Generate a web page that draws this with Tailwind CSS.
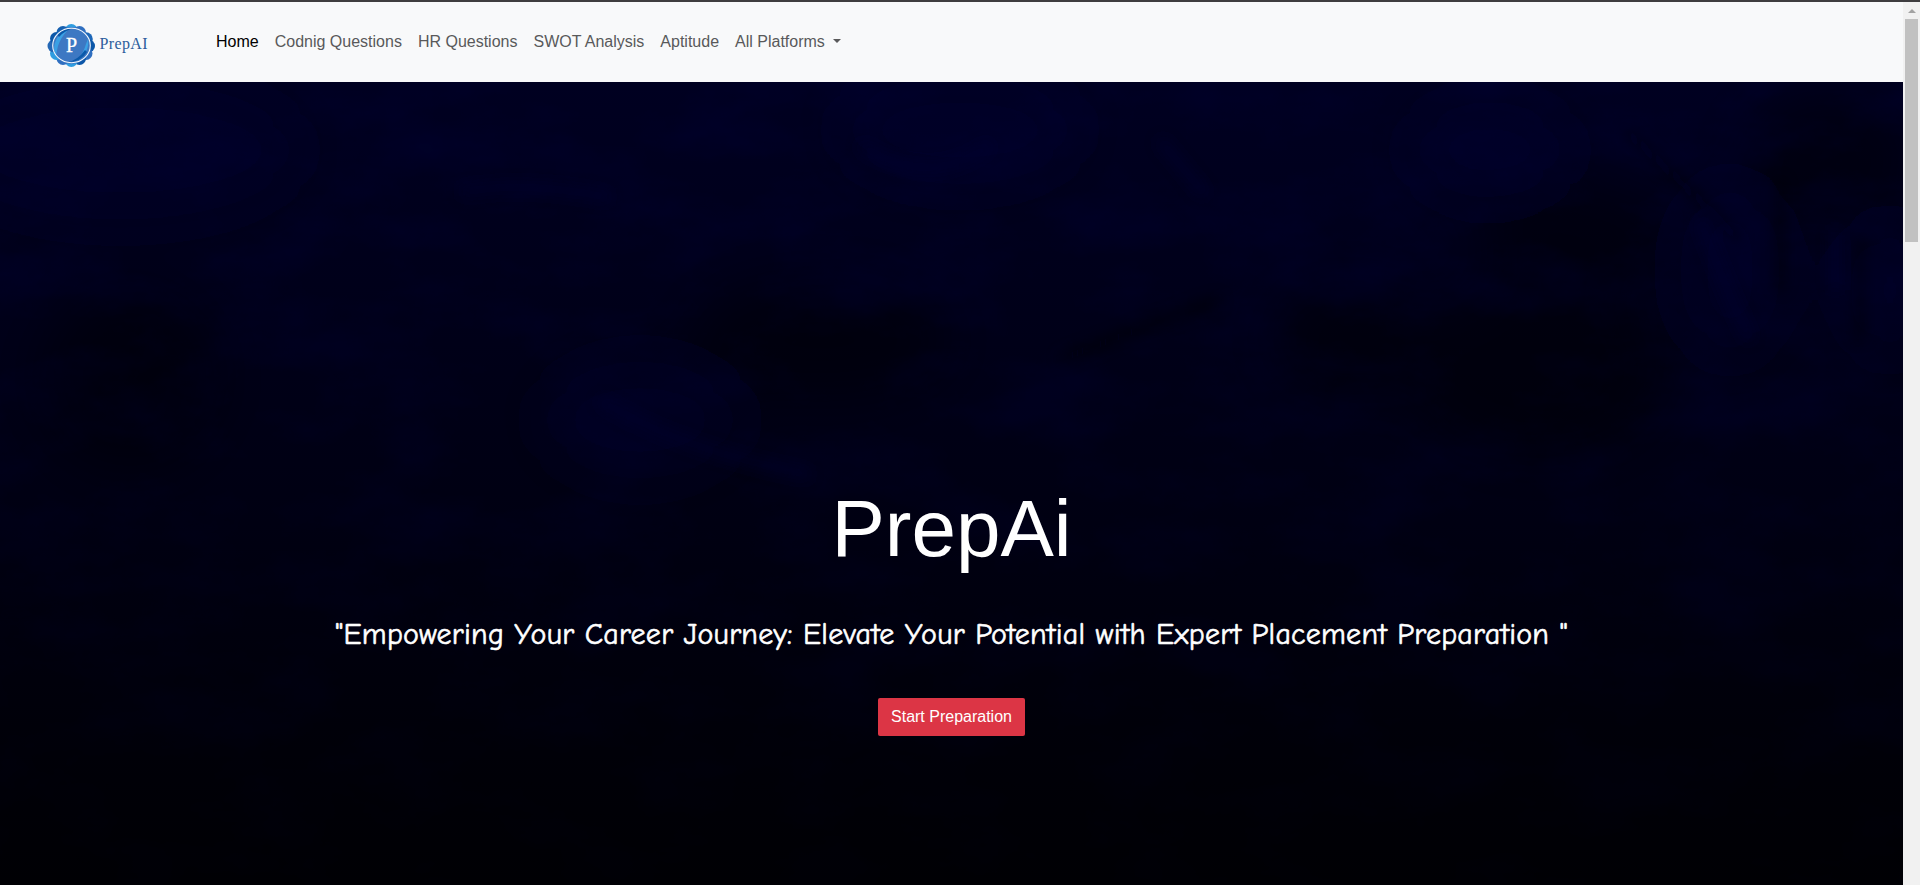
<!DOCTYPE html>
<html lang="en">
<head>
<meta charset="utf-8">
<title>PrepAI</title>
<script src="https://cdn.jsdelivr.net/npm/@tailwindcss/browser@4"></script>
</head>
<body class="h-[885px] overflow-hidden bg-black font-['Liberation_Sans',Arial,sans-serif] text-base">
<div class="flex h-[885px] flex-col border-t-2 border-[#3e3d3f]">
  <div class="flex min-h-0 flex-1">
    <div class="flex min-w-0 flex-1 flex-col">
      <header class="flex h-20 shrink-0 items-start bg-[#f8f9fa] pl-[46px]">
        <a class="flex w-[170px] pt-[20px]" aria-label="PrepAI">
          <svg width="104" height="48" viewBox="46 22 104 48">
            <g fill="#2f9de0">
              <circle cx="71.3" cy="30.5" r="6.5"/><circle cx="86" cy="39" r="6.8" fill="#1c67b8"/><circle cx="88.5" cy="46" r="6.5" fill="#0c57a8"/><circle cx="86" cy="53.5" r="6.5" fill="#2f6fc0"/><circle cx="79.5" cy="58.5" r="6.5" fill="#0c57a8"/><circle cx="71.3" cy="60.5" r="6.5"/><circle cx="63" cy="58.5" r="6.5" fill="#2f6fc0"/><circle cx="56.5" cy="53.5" r="6.5"/><circle cx="54" cy="46" r="6.5" fill="#2468b5"/><circle cx="56.5" cy="38.5" r="6.5" fill="#0c57a8"/><circle cx="63" cy="32.5" r="6.5" fill="#1560b0"/><circle cx="79.5" cy="32.5" r="6.5" fill="#2f6fc0"/>
            </g>
            <circle cx="71.5" cy="45.5" r="18.5" fill="#3d78c3"/>
            <path d="M54 50Q54 35 68 30Q61 37 58 46L56 55Z" fill="#3aa0e4"/>
            <path d="M57 34Q63 27 75 28Q65 30 59 37Z" fill="#0b59aa"/>
            <path d="M88 39Q90 52 77 61Q84 52 86 44Z" fill="#3aa0e4"/>
            <path d="M87 52Q81 62 68 62Q78 60 85 50Z" fill="#0b59aa"/>
            <ellipse cx="71.5" cy="45.5" rx="18.8" ry="17.2" fill="none" stroke="#f3f8fd" stroke-width="1.1"/>
            <text x="71.5" y="52" text-anchor="middle" font-family="Liberation Serif,serif" font-size="20" fill="#fff" stroke="#fff" stroke-width=".3">P</text>
            <text x="99.5" y="49" textLength="48" font-family="Liberation Serif,serif" font-size="16" fill="#2c5d9c">PrepAI</text>
          </svg>
        </a>
        <nav class="flex gap-4 pt-[28px] leading-6 text-[#59595a]">
          <a class="text-black">Home</a>
          <a>Codnig Questions</a>
          <a>HR Questions</a>
          <a>SWOT Analysis</a>
          <a>Aptitude</a>
          <a class="flex items-center gap-2">All Platforms <span class="mb-0.5 border-x-4 border-t-4 border-x-transparent border-t-[#59595a]"></span></a>
        </nav>
      </header>
      <main class="relative min-h-0 flex-1 overflow-hidden bg-linear-to-b from-[#000021] via-[#000012] via-55% to-[#000004]">
        <svg class="absolute inset-0" width="1903" height="803" viewBox="0 82 1903 803" aria-hidden="true">
          <defs>
            <filter id="soft" x="-50%" y="-50%" width="200%" height="200%"><feGaussianBlur stdDeviation="28"/></filter>
            <filter id="fine" x="-50%" y="-50%" width="200%" height="200%"><feGaussianBlur stdDeviation="7"/></filter>
            <filter id="paint" x="0" y="0" width="100%" height="100%" color-interpolation-filters="sRGB">
              <feTurbulence type="fractalNoise" baseFrequency=".009 .016" numOctaves="5" seed="8"/>
              <feColorMatrix values="0 0 0 0 0  0 0 0 0 .01  0 0 0 0 .2  2.2 0 0 0 -.85"/>
            </filter>
            <linearGradient id="fade" x1="0" y1="0" x2="0" y2="1"><stop stop-color="#fff"/><stop offset=".55" stop-color="#888"/><stop offset="1" stop-color="#222"/></linearGradient>
            <mask id="down"><rect y="82" width="1903" height="803" fill="url(#fade)"/></mask>
          </defs>
          <g filter="url(#soft)">
            <g fill="#00002d" opacity=".4">
              <ellipse cx="960" cy="130" rx="120" ry="55"/><ellipse cx="120" cy="150" rx="180" ry="70"/><ellipse cx="1490" cy="150" rx="80" ry="50"/><ellipse cx="1730" cy="270" rx="50" ry="90"/><ellipse cx="1890" cy="290" rx="40" ry="70"/><ellipse cx="640" cy="420" rx="100" ry="60"/>
            </g>
            <g fill="#000008" opacity=".45">
              <ellipse cx="1580" cy="240" rx="100" ry="60"/><ellipse cx="1540" cy="370" rx="130" ry="90"/><ellipse cx="1830" cy="160" rx="90" ry="70"/><ellipse cx="820" cy="340" rx="130" ry="60"/><ellipse cx="130" cy="380" rx="90" ry="90"/><ellipse cx="1350" cy="340" rx="80" ry="55"/>
            </g>
          </g>
          <g filter="url(#fine)" fill="none" stroke-width="9" opacity=".6">
            <path d="M860 145Q930 190 990 145M1160 140L1205 195M460 192Q530 180 610 198M1700 220Q1730 300 1750 340M1835 230V290M600 400Q680 450 810 475" stroke="#000030"/>
            <path d="M1625 130Q1690 190 1740 240M1780 180V290M1860 240V340M1060 360Q1160 320 1220 300" stroke="#000009"/>
          </g>
          <rect y="82" width="1903" height="803" filter="url(#paint)" mask="url(#down)" opacity=".45"/>
        </svg>
        <section class="relative flex flex-col items-center pt-[399px] text-white">
          <h1 class="text-[80px] leading-24">PrepAi</h1>
          <p class="mt-[35px] flex h-11 w-[1234px] items-center justify-center whitespace-nowrap font-['Comic_Sans_MS','Comic_Neue','Open_Sans',sans-serif] text-[30px] font-medium tracking-[0.24px] [-webkit-text-stroke:0.6px_white]">"Empowering Your Career Journey: Elevate Your Potential with Expert Placement Preparation "</p>
          <button class="mt-[42px] h-[38px] w-[147px] rounded-xs bg-[#dc3545] leading-6">Start Preparation</button>
        </section>
      </main>
    </div>
    <div class="flex w-[17px] shrink-0 flex-col items-center bg-[#f1f1f1]">
      <div class="flex h-[17px] items-center"><svg width="8" height="4" viewBox="0 0 8 4"><path d="M4 0 8 4H0Z" fill="#a3a3a3"/></svg></div>
      <div class="h-[223px] w-[13px] bg-[#c1c1c1]"></div>
    </div>
  </div>
</div>
</body>
</html>
